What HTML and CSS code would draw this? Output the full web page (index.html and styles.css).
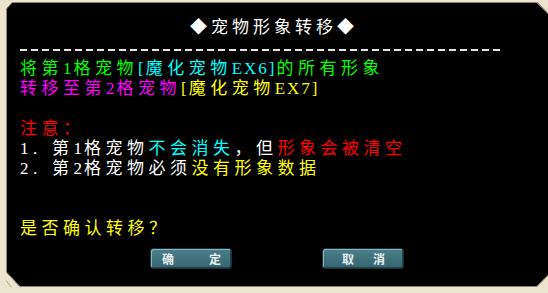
FILE: index.html
```html
<!DOCTYPE html>
<html>
<head>
<meta charset="utf-8">
<link rel="stylesheet" href="styles.css">
</head>
<body>
<div class="frame">
  <svg class="corners" width="548" height="293" viewBox="0 0 548 293">
    <polygon points="0,0 14,0 6,9 6,13 0,13" fill="#ece4cf"/>
    <line x1="14" y1="0.5" x2="6.5" y2="9" stroke="#8c8474" stroke-width="1"/>
    <polygon points="534,0 548,0 548,14" fill="#ece4cf"/>
    <line x1="536" y1="1" x2="547.5" y2="12.5" stroke="#8c8474" stroke-width="1"/>
    <polygon points="6,272 20,287 6,287" fill="#ece4cf"/>
    <line x1="6.5" y1="272" x2="20" y2="286.5" stroke="#8c8474" stroke-width="1"/>
    <polygon points="2,276 14,290 2,290" fill="none" stroke="#a8a090" stroke-width="1"/>
    <polygon points="536,287 548,275 548,293 536,293" fill="#ece4cf"/>
    <line x1="536.5" y1="287" x2="548" y2="275.5" stroke="#8c8474" stroke-width="1"/>
  </svg>
  <div class="content">
    <div class="title">◆宠物形象转移◆</div>
    <div class="dashes"></div>
    <div class="line"><span class="g">将第<span class="lat">1</span>格宠物</span><span class="c"><span class="lat">[</span>魔化宠物<span class="lat">EX6]</span></span><span class="g">的所有形象</span></div>
    <div class="line"><span class="m">转移至第<span class="lat">2</span>格宠物</span><span class="y"><span class="lat">[</span>魔化宠物<span class="lat">EX7]</span></span></div>
    <div class="line blank"></div>
    <div class="line"><span class="r">注意：</span></div>
    <div class="line"><span class="num">1.</span><span class="w">第<span class="lat">1</span>格宠物</span><span class="c">不会消失</span><span class="w">，但</span><span class="r">形象会被清空</span></div>
    <div class="line"><span class="num">2.</span><span class="w">第<span class="lat">2</span>格宠物必须</span><span class="y">没有形象数据</span></div>
    <div class="line blank"></div>
    <div class="line blank"></div>
    <div class="line"><span class="y">是否确认转移？</span></div>
    <div class="buttons">
      <div class="btn btn-ok"><span>确</span><span>定</span></div>
      <div class="btn btn-cancel"><span>取</span><span>消</span></div>
    </div>
  </div>
</div>
</body>
</html>
```

FILE: styles.css
```css
html, body {
  margin: 0;
  padding: 0;
  background: #000;
}

.frame {
  position: relative;
  width: 548px;
  height: 293px;
  box-sizing: border-box;
  background: #000;
  border-left: 6px solid #ece4cf;
  border-top: 2px solid #ece4cf;
  border-bottom: 6px solid #ece4cf;
  box-shadow: inset 1px 1px 0 #8c8474, inset 0 -1px 0 #8c8474;
  overflow: hidden;
}

.frame::after {
  content: "";
  position: absolute;
  left: -6px;
  right: 0;
  bottom: -6px;
  height: 1px;
  background: #d6ccb2;
}

.corners {
  position: absolute;
  left: -6px;
  top: -2px;
  pointer-events: none;
}

.content {
  padding: 16px 0 0 14px;
  font-family: "Liberation Serif", "Noto Sans CJK SC", serif;
  font-size: 17px;
  letter-spacing: 4.5px;
  color: #fff;
}

.lat {
  letter-spacing: 2px;
}

.title {
  height: 20px;
  line-height: 20px;
  text-align: center;
  color: #fff;
  margin-left: -14px;
  padding-right: 6px;
  letter-spacing: 4px;
}

.dashes {
  margin-top: 11px;
  width: 480px;
  height: 2px;
  background: repeating-linear-gradient(to right, #e4e4e4 0, #e4e4e4 7px, transparent 7px, transparent 11px);
  margin-bottom: 8px;
}

.line {
  height: 20px;
  line-height: 20px;
  white-space: nowrap;
}

.num {
  display: inline-block;
  width: 32px;
  color: #fff;
}

.g { color: #00ff00; }
.c { color: #00ffff; }
.m { color: #ff00ff; }
.y { color: #ffff00; }
.r { color: #ff0000; }
.w { color: #ffffff; }

.buttons {
  display: flex;
  gap: 90px;
  padding-left: 130px;
  margin-top: 9px;
}

.btn {
  width: 82px;
  height: 21px;
  box-sizing: border-box;
  display: flex;
  align-items: center;
  justify-content: space-between;
  background: linear-gradient(#4a7f8b, #35656f);
  border: 1px solid #1b3238;
  border-radius: 3px;
  box-shadow: inset 1px 1px 0 #8fb6bf, inset -1px -1px 0 #22434a;
  color: #e8eef0;
  font-family: "Noto Sans CJK SC", sans-serif;
  font-size: 12px;
  font-weight: bold;
  letter-spacing: 0;
  line-height: 1;
}

.btn-ok { padding: 0 10px 0 11px; }
.btn-cancel { padding: 0 18px 0 19px; }
```
